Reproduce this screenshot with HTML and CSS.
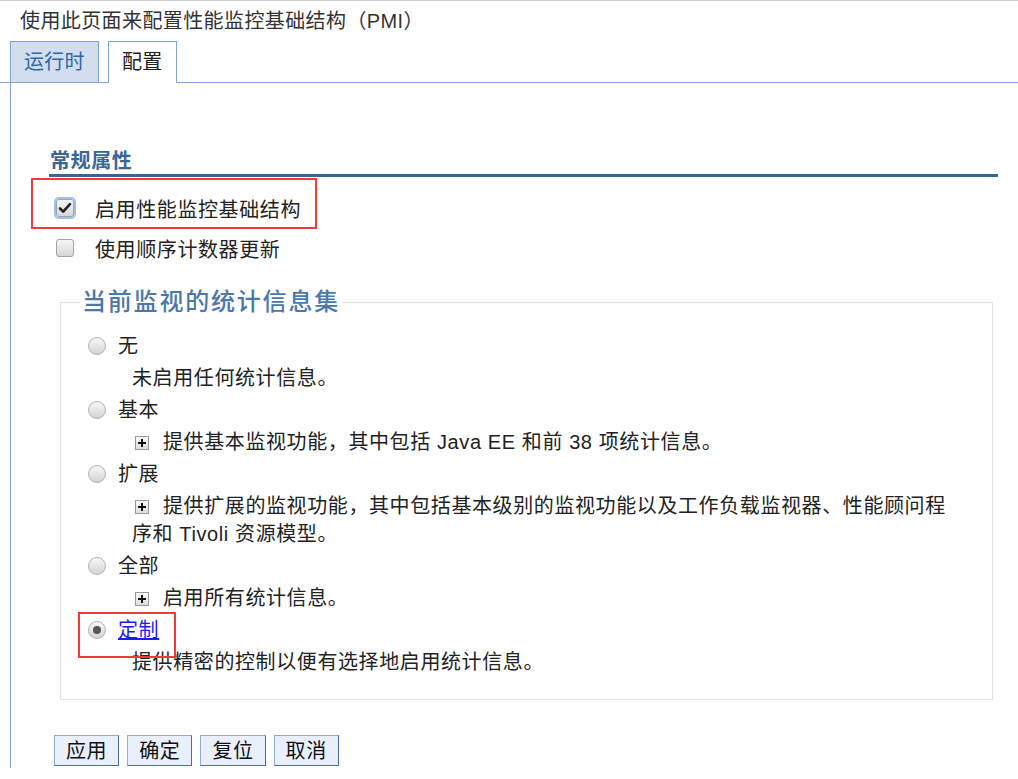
FILE: index.html
```html
<!DOCTYPE html>
<html lang="zh-CN">

<head>
  <meta charset="UTF-8">
  <title>PMI</title>
  <link rel="stylesheet" href="styles.css">
</head>

<body>

  <div class="page-title">使用此页面来配置性能监控基础结构（PMI）</div>

  <div class="tabs">
    <div class="tab">运行时</div>
    <div class="tab active">配置</div>
  </div>

  <div class="panel">
    <h3 class="section">常规属性</h3>

    <div class="check-row">
      <span class="checkbox checked">
        <svg width="14" height="12" viewBox="0 0 14 12"><path d="M2 6.5 L5.2 9.6 L12 2.2" fill="none" stroke="#222" stroke-width="2.6" stroke-linecap="round" stroke-linejoin="round"/></svg>
      </span>
      <span>启用性能监控基础结构</span>
      <span class="mark mark-check"></span>
    </div>
    <div class="check-row">
      <span class="checkbox"></span>
      <span>使用顺序计数器更新</span>
    </div>

    <fieldset class="stats">
      <legend>当前监视的统计信息集</legend>

      <div class="opt"><span class="radio"></span>无</div>
      <div class="desc">未启用任何统计信息。</div>

      <div class="opt"><span class="radio"></span>基本</div>
      <div class="desc"><span class="plus"></span>提供基本监视功能，其中包括 Java EE 和前 38 项统计信息。</div>

      <div class="opt"><span class="radio"></span>扩展</div>
      <div class="desc"><span class="plus"></span>提供扩展的监视功能，其中包括基本级别的监视功能以及工作负载监视器、性能顾问程序和 Tivoli 资源模型。</div>

      <div class="opt"><span class="radio"></span>全部</div>
      <div class="desc"><span class="plus"></span>启用所有统计信息。</div>

      <div class="opt"><span class="radio selected"></span><a href="#">定制</a><span class="mark mark-custom"></span></div>
      <div class="desc">提供精密的控制以便有选择地启用统计信息。</div>
    </fieldset>

    <div class="buttons">
      <button>应用</button>
      <button>确定</button>
      <button>复位</button>
      <button>取消</button>
    </div>
  </div>

</body>

</html>
```

FILE: styles.css
```css
body {
  margin: 0;
  font-family: 'Liberation Sans', 'Noto Sans CJK SC', sans-serif;
  font-size: 20px;
  letter-spacing: 0.6px;
  color: #222;
  background-color: #fff;
  border-top: 1px solid #cfcfcf;
}

.page-title {
  padding: 6px 0 0 20px;
  height: 34px;
  line-height: 28px;
  color: #333;
  letter-spacing: 0.4px;
}

.tabs {
  display: flex;
  padding-left: 10px;
  border-bottom: 1px solid #84a2d4;
}

.tab {
  height: 40px;
  line-height: 40px;
  padding: 0 13px;
  margin-right: 9px;
  border: 1px solid #84a2d4;
  border-bottom: none;
  background-color: #d2ddee;
  color: #2c69a6;
  letter-spacing: 0.3px;
}

.tab.active {
  background-color: #fff;
  color: #222;
  margin-bottom: -1px;
  height: 41px;
}

.panel {
  margin-left: 10px;
  border-left: 1px solid #84a2d4;
  padding: 65px 20px 0 38px;
  min-height: 620px;
}

.section {
  margin: 0;
  font-size: 20px;
  line-height: 26px;
  font-weight: bold;
  color: #3a6696;
  padding-left: 1px;
  border-bottom: 3px solid #336699;
}

.check-row {
  position: relative;
  display: flex;
  align-items: center;
  height: 40px;
  padding-left: 7px;
}

.check-row:first-of-type {
  margin-top: 11px;
}

.checkbox {
  display: inline-flex;
  align-items: center;
  justify-content: center;
  width: 16px;
  height: 16px;
  margin-right: 21px;
  border: 1px solid #a2a2a2;
  border-radius: 3px;
  background: linear-gradient(#f6f6f6, #d6d6d6);
}

.checkbox.checked {
  box-shadow: 0 0 0 2px #9cc0f4;
}

/* red annotation boxes */
.mark {
  position: absolute;
  border: 2px solid #ef3b3b;
  pointer-events: none;
}

.mark-check {
  left: -18px;
  top: -10px;
  width: 282px;
  height: 47px;
}

.mark-custom {
  left: -2px;
  top: -2px;
  width: 94px;
  height: 42px;
}

.stats {
  margin: 20px 5px 0 11px;
  padding: 14px 0 21px 19px;
  border: 1px solid #e0e0e0;
}

.stats legend {
  padding: 0 2px;
  font-size: 24px;
  line-height: 28px;
  letter-spacing: 1.8px;
  font-weight: 500;
  color: #4a78ab;
}

.opt {
  position: relative;
  display: flex;
  align-items: center;
  padding: 2px 0 2px 8px;
  line-height: 28px;
}

.radio {
  display: inline-block;
  position: relative;
  width: 16px;
  height: 16px;
  margin-right: 12px;
  border: 1px solid #b2b2b2;
  border-radius: 50%;
  background: linear-gradient(#f8f8f8, #d4d4d4);
}

.radio.selected::after {
  content: '';
  position: absolute;
  left: 4px;
  top: 4px;
  width: 8px;
  height: 8px;
  border-radius: 50%;
  background-color: #555;
}

.opt a {
  color: #1a1aff;
}

.desc {
  padding: 2px 28px 2px 52px;
  line-height: 28px;
}

.plus {
  display: inline-block;
  position: relative;
  width: 12px;
  height: 12px;
  margin: 0 14px 0 3px;
  vertical-align: -1px;
  border: 1px solid #9a9a9a;
  background: linear-gradient(#fcfcfc, #dcdcdc);
}

.plus::before,
.plus::after {
  content: '';
  position: absolute;
  background-color: #111;
}

.plus::before {
  left: 2px;
  top: 5px;
  width: 8px;
  height: 2px;
}

.plus::after {
  left: 5px;
  top: 2px;
  width: 2px;
  height: 8px;
}

.buttons {
  display: flex;
  gap: 8px;
  margin: 35px 0 0 5px;
}

button {
  height: 31px;
  padding: 0 11px;
  font-family: inherit;
  font-size: 20px;
  letter-spacing: 0.6px;
  line-height: 28px;
  color: #111;
  background-color: #e9f0fc;
  border: 1px solid #8fabd2;
  border-right-color: #4b6e9e;
  border-bottom-color: #4b6e9e;
}
```
